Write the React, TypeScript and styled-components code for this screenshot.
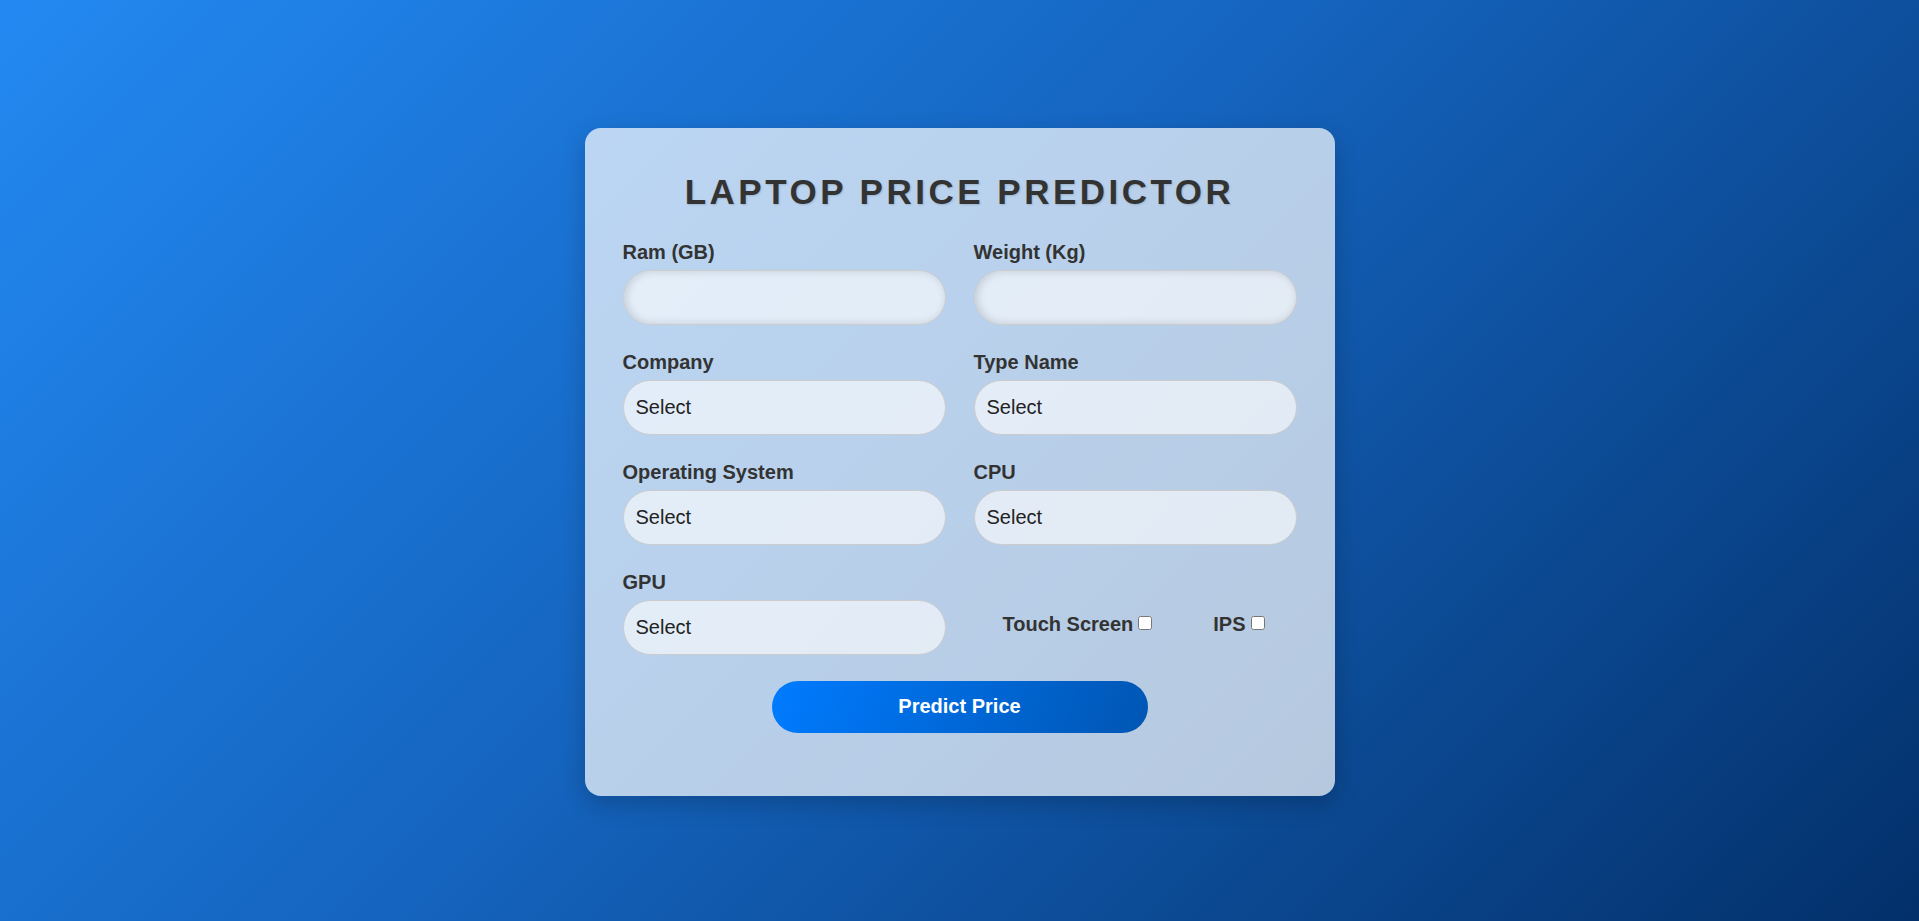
import styled, { createGlobalStyle } from 'styled-components';

const GlobalStyle = createGlobalStyle`
  * {
    box-sizing: border-box;
  }
  body {
    margin: 0;
    font-family: 'Liberation Sans', Arial, sans-serif;
    background: linear-gradient(135deg, #2389f2 0%, #1565c0 45%, #03306a 100%);
    min-height: 100vh;
  }
`;

const Page = styled.div`
  min-height: 100vh;
  display: flex;
  align-items: center;
  justify-content: center;
`;

const Card = styled.div`
  width: 750px;
  padding: 44px 38px 63px;
  margin-top: 2px;
  border-radius: 16px;
  background: rgba(255, 255, 255, 0.7);
  box-shadow: 0 8px 24px rgba(0, 0, 0, 0.2);
`;

const Title = styled.h1`
  margin: 0 0 28px;
  text-align: center;
  font-size: 35px;
  line-height: 40px;
  font-weight: 700;
  letter-spacing: 3.5px;
  color: #333;
  text-shadow: 1px 1px 2px rgba(0, 0, 0, 0.15);
`;

const Form = styled.form`
  display: grid;
  grid-template-columns: 1fr 1fr;
  column-gap: 28px;
  row-gap: 25px;
`;

const Field = styled.div`
  display: flex;
  flex-direction: column;
`;

const Label = styled.label`
  font-size: 20px;
  line-height: 24px;
  font-weight: 700;
  color: #333;
  margin-bottom: 6px;
`;

const TextInput = styled.input`
  height: 55px;
  border-radius: 28px;
  border: 1px solid #ccc;
  background: rgba(255, 255, 255, 0.6);
  box-shadow: inset 2px 0 8px rgba(0, 0, 0, 0.15);
  padding: 0 14px;
  font-family: inherit;
  font-size: 20px;
  color: #222;
  outline: none;
`;

const Select = styled.select`
  appearance: none;
  height: 55px;
  border-radius: 28px;
  border: 1px solid #ccc;
  background: rgba(255, 255, 255, 0.6);
  padding: 0 12px;
  font-family: inherit;
  font-size: 20px;
  color: #222;
  outline: none;
`;

const Checks = styled.div`
  display: flex;
  justify-content: space-around;
  align-items: flex-end;
  padding-bottom: 19px;
`;

const CheckLabel = styled.label`
  font-size: 20px;
  line-height: 24px;
  font-weight: 700;
  color: #333;
  white-space: nowrap;
  input {
    width: 14px;
    height: 14px;
    margin: 3px 3px 3px 5px;
    vertical-align: 1px;
  }
`;

const Submit = styled.button`
  display: block;
  width: 376px;
  height: 52px;
  margin: 26px auto 0;
  border: none;
  border-radius: 26px;
  background: linear-gradient(110deg, #007bff 0%, #0056b3 100%);
  color: #fff;
  font-family: inherit;
  font-size: 20px;
  font-weight: 700;
  cursor: pointer;
`;

const selects = [
  { id: 'company', label: 'Company' },
  { id: 'type', label: 'Type Name' },
  { id: 'os', label: 'Operating System' },
  { id: 'cpu', label: 'CPU' },
  { id: 'gpu', label: 'GPU' },
];

const App = () => {
  return (
    <Page>
      <GlobalStyle />
      <Card>
        <Title>LAPTOP PRICE PREDICTOR</Title>
        <Form onSubmit={(e) => e.preventDefault()}>
          <Field>
            <Label htmlFor='ram'>Ram (GB)</Label>
            <TextInput id='ram' type='number' />
          </Field>
          <Field>
            <Label htmlFor='weight'>Weight (Kg)</Label>
            <TextInput id='weight' type='number' />
          </Field>
          {selects.map((s) => (
            <Field key={s.id}>
              <Label htmlFor={s.id}>{s.label}</Label>
              <Select id={s.id} defaultValue=''>
                <option value=''>Select</option>
              </Select>
            </Field>
          ))}
          <Checks>
            <CheckLabel>
              Touch Screen
              <input type='checkbox' />
            </CheckLabel>
            <CheckLabel>
              IPS
              <input type='checkbox' />
            </CheckLabel>
          </Checks>
        </Form>
        <Submit type='button'>Predict Price</Submit>
      </Card>
    </Page>
  );
};

export default App;
